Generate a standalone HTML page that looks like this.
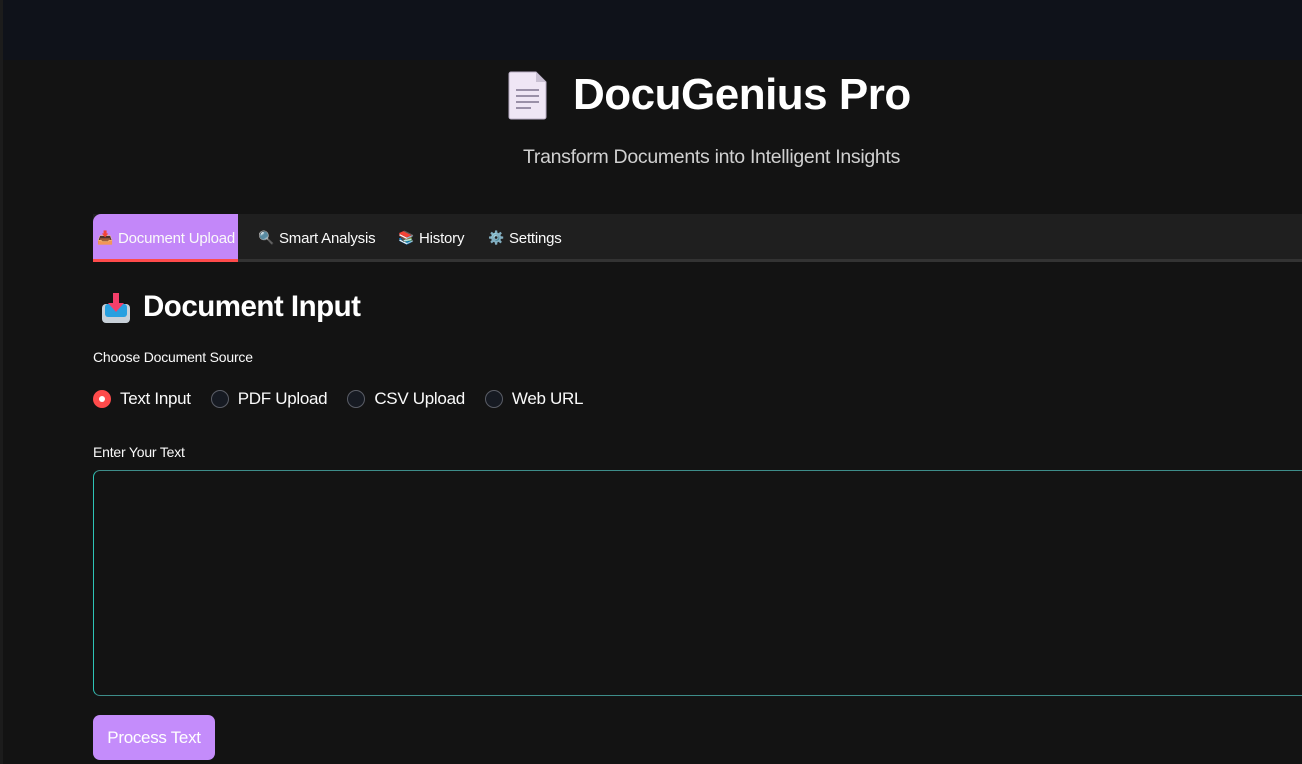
<!DOCTYPE html>
<html><head><meta charset="utf-8"><style>
*{margin:0;padding:0;box-sizing:border-box}
body{width:1302px;height:764px;background:#131313;font-family:"Liberation Sans",sans-serif;color:#fafafa;overflow:hidden;position:relative}
.top{position:absolute;left:0;top:0;width:1302px;height:60px;background:#0f121a}
.lstrip{position:absolute;left:0;top:0;width:3px;height:764px;background:#1c1c1c}
.title{position:absolute;left:507px;top:70px;display:flex;align-items:center}
.title h1{font-size:44px;font-weight:bold;margin-left:24px;letter-spacing:-0.5px;color:#fff}
.sub{position:absolute;left:523px;top:146px;font-size:19.5px;color:#d0d0d0;letter-spacing:-0.3px}
.tabs{position:absolute;left:93px;top:214px;width:1209px;height:48px;background:#1f1f1f;border-bottom:3px solid #333}
.tab{position:absolute;top:0;height:48px;display:flex;align-items:center;font-size:15px;color:#fafafa;letter-spacing:-0.2px}
.tab.active{left:0;width:145px;background:#c387f9;border-radius:8px 0 0 0;border-bottom:3px solid #ff4b4b;height:48px;padding-left:4px;padding-top:3px}
.tab .ic{margin-right:5px;font-size:13px}
h2{position:absolute;left:143px;top:290px;font-size:29.5px;font-weight:bold;color:#fff;letter-spacing:-0.5px}
.lbl{position:absolute;font-size:14px;color:#fafafa;letter-spacing:-0.2px}
.radios{position:absolute;left:93px;top:389px;display:flex;align-items:center;font-size:17px;letter-spacing:-0.3px}
.r{display:flex;align-items:center;margin-right:20px}
.dot{width:18px;height:18px;border-radius:50%;border:1px solid #5a5d66;background:#161a22;margin-right:9px}
.dot.on{background:#ff4b4b;border:none;position:relative}
.dot.on:after{content:"";position:absolute;left:6px;top:6px;width:6px;height:6px;border-radius:50%;background:#fff}
.ta{position:absolute;left:93px;top:470px;width:1220px;height:226px;border:1px solid #3e8d8a;border-left-color:#2ec4b6;border-radius:7px;background:#131313}
.btn{position:absolute;left:93px;top:715px;width:122px;height:45px;background:#c48cfb;border-radius:7px;color:#fff;font-size:17px;display:flex;align-items:center;justify-content:center;letter-spacing:-0.3px}
</style></head><body>
<div class="top"></div><div class="lstrip"></div>
<div class="title">
<svg width="42" height="50" viewBox="0 0 42 50"><path d="M4 2h25l10 10v35a2 2 0 0 1-2 2H4a2 2 0 0 1-2-2V4a2 2 0 0 1 2-2z" fill="#efe6f5" stroke="#b8aec4" stroke-width="1"/><path d="M29 2v10h10z" fill="#c9c0d3"/><g stroke="#9a90a8" stroke-width="2"><line x1="9" y1="20" x2="32" y2="20"/><line x1="9" y1="26" x2="32" y2="26"/><line x1="9" y1="32" x2="32" y2="32"/><line x1="9" y1="38" x2="24" y2="38"/></g></svg>
<h1>DocuGenius Pro</h1></div>
<div class="sub">Transform Documents into Intelligent Insights</div>
<div class="tabs">
<div class="tab active"><span class="ic">📥</span>Document Upload</div>
<div class="tab" style="left:165px"><span class="ic">🔍</span>Smart Analysis</div>
<div class="tab" style="left:305px"><span class="ic">📚</span>History</div>
<div class="tab" style="left:395px"><span class="ic">⚙️</span>Settings</div>
</div>
<svg style="position:absolute;left:101px;top:292px" width="30" height="32" viewBox="0 0 30 32"><rect x="1" y="12" width="28" height="19" rx="4" fill="#c8d0d8"/><rect x="4" y="12" width="22" height="13" rx="3" fill="#28a0e0"/><rect x="12" y="1" width="6" height="12" fill="#f43f6a"/><path d="M7 11h16l-8 9z" fill="#f43f6a"/></svg>
<h2>Document Input</h2>
<div class="lbl" style="left:93px;top:349px">Choose Document Source</div>
<div class="radios">
<div class="r"><div class="dot on"></div>Text Input</div>
<div class="r"><div class="dot"></div>PDF Upload</div>
<div class="r"><div class="dot"></div>CSV Upload</div>
<div class="r"><div class="dot"></div>Web URL</div>
</div>
<div class="lbl" style="left:93px;top:444px">Enter Your Text</div>
<div class="ta"></div>
<div class="btn">Process Text</div>
</body></html>
